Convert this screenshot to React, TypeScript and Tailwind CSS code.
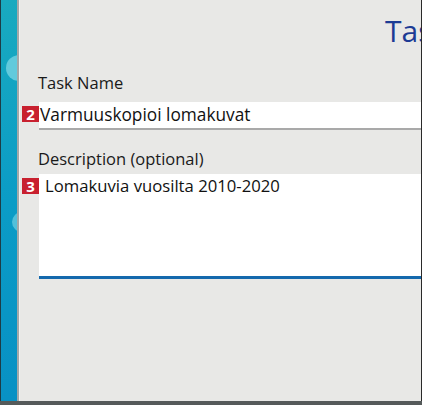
import React from "react";

const Badge: React.FC<{ n: string }> = ({ n }) => (
  <span className="flex h-[16px] w-[17px] items-center justify-center bg-[#c8202f] text-[15px] font-bold leading-none text-white">
    {n}
  </span>
);

const App: React.FC = () => {
  return (
    <div
      className="flex h-[405px] w-[422px] overflow-hidden border-b-[4px] border-b-[#555a5a] bg-[#e8e8e6]"
      style={{ fontFamily: "'Open Sans', 'DejaVu Sans', sans-serif" }}
    >
      {/* decorative side strip */}
      <div className="relative h-full w-[17px] shrink-0 overflow-hidden border-l border-[#1d3c46] bg-gradient-to-b from-[#19aabf] via-[#0b9cc6] to-[#0891c4]">
        <div className="absolute left-[5px] top-[55px] h-[26px] w-[26px] rounded-full bg-[#62cadc]" />
        <div className="absolute left-[11px] top-[212px] h-[20px] w-[20px] rounded-full bg-[#52c0da]" />
      </div>
      <div className="w-[2px] shrink-0 bg-[#a4a8a8]" />
      <div className="w-[1px] shrink-0 bg-[#f2f2f0]" />

      <div className="flex h-full min-w-0 flex-1 flex-col border-r border-r-[#2a2a2a]">
        <div className="mt-[13px] h-[36px] overflow-hidden whitespace-nowrap pl-[365px] text-[30px] leading-[36px] text-[#1c3b94]">
          Task
        </div>

        <div className="mt-[24px] pl-[18px] text-[16.5px] leading-[20px] text-[#1a1a1a]">Task Name</div>

        <div className="mt-[9px] flex items-start">
          <div className="mt-[4px] w-[19px] shrink-0 pl-[2px]">
            <Badge n="2" />
          </div>
          <div className="flex h-[28px] min-w-0 flex-1 items-center whitespace-nowrap border-b-[2px] border-b-[#a9a9a9] bg-white pl-[1px] text-[17.3px] text-[#111]">
            Varmuuskopioi lomakuvat
          </div>
        </div>

        <div className="mt-[19px] pl-[18px] text-[16.5px] leading-[20px] text-[#1a1a1a]">Description (optional)</div>

        <div className="mt-[5px] flex items-start">
          <div className="mt-[4px] w-[19px] shrink-0 pl-[2px]">
            <Badge n="3" />
          </div>
          <div className="h-[105px] min-w-0 flex-1 whitespace-nowrap border-b-[3px] border-b-[#1469ad] bg-white pl-[6px] pt-[1px] text-[16.7px] leading-[22px] text-[#111]">
            Lomakuvia vuosilta 2010-2020
          </div>
        </div>
      </div>
    </div>
  );
};

export default App;
